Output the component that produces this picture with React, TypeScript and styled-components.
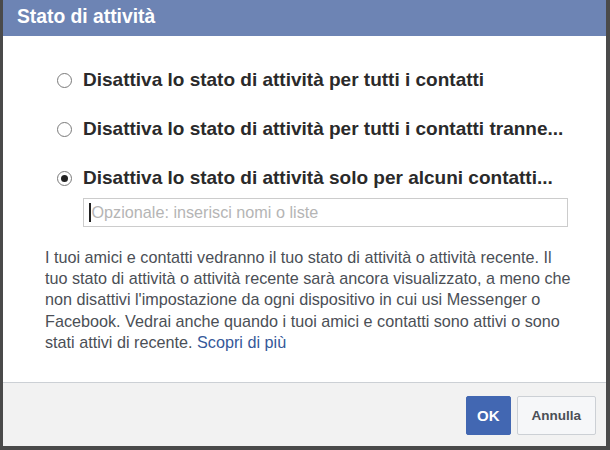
import React from "react";
import styled, { createGlobalStyle } from "styled-components";

const Global = createGlobalStyle`
  html, body { margin: 0; padding: 0; background: #fff; }
  body { font-family: "Liberation Sans", Arial, sans-serif; }
`;

const Dialog = styled.div`
  width: 610px;
  height: 450px;
  box-sizing: border-box;
  border-left: 3px solid #4a4a4a;
  border-right: 4px solid #4a4a4a;
  border-bottom: 4px solid #4a4a4a;
  display: flex;
  flex-direction: column;
  background: #fff;
`;

const Header = styled.div`
  height: 36px;
  flex: none;
  background: #6d84b4;
  color: #fff;
  font-weight: bold;
  font-size: 19.3px;
  display: flex;
  align-items: center;
  padding-left: 14px;
  padding-bottom: 3px;
  box-sizing: border-box;
`;

const Body = styled.div`
  flex: 1;
  padding: 34px 30px 0 42px;
  display: flex;
  flex-direction: column;
`;

const Options = styled.div`
  display: flex;
  flex-direction: column;
  gap: 29px;
  padding-left: 12px;
`;

const Option = styled.label`
  display: flex;
  align-items: center;
  gap: 11px;
  height: 20px;
  font-size: 19px;
  font-weight: bold;
  color: #2a2a2a;
`;

const Radio = styled.span<{ $checked?: boolean }>`
  width: 15px;
  height: 15px;
  border-radius: 50%;
  border: 1.5px solid #7a7a7a;
  box-sizing: border-box;
  display: flex;
  align-items: center;
  justify-content: center;
  flex: none;
  &::after {
    content: "";
    display: ${(p) => (p.$checked ? "block" : "none")};
    width: 7px;
    height: 7px;
    border-radius: 50%;
    background: #222;
  }
`;

const Input = styled.div`
  margin: 10px 0 0 38px;
  width: 485px;
  height: 29px;
  box-sizing: border-box;
  border: 1px solid #ccc;
  display: flex;
  align-items: center;
  padding-left: 5px;
  font-size: 16.2px;
  color: #b5b5b5;
`;

const Caret = styled.span`
  width: 1.5px;
  height: 19px;
  background: #222;
  margin-right: 1px;
`;

const Paragraph = styled.p`
  margin: 20px 0 0 0;
  font-size: 16.2px;
  line-height: 21.2px;
  color: #4b4f56;
  white-space: nowrap;
`;

const Link = styled.a`
  color: #365899;
  text-decoration: none;
`;

const Footer = styled.div`
  height: 64px;
  flex: none;
  box-sizing: border-box;
  border-top: 1px solid #ccd0d5;
  background: #f2f2f2;
  display: flex;
  justify-content: flex-end;
  align-items: flex-start;
  padding: 13px 10px 0 0;
  gap: 6px;
`;

const Button = styled.button<{ $primary?: boolean }>`
  height: 39px;
  box-sizing: border-box;
  border-radius: 2px;
  font-family: "Liberation Sans", Arial, sans-serif;
  font-weight: bold;
  font-size: ${(p) => (p.$primary ? "15px" : "13.5px")};
  padding: 0 ${(p) => (p.$primary ? "10px" : "14px")};
  border: 1px solid ${(p) => (p.$primary ? "#4267b2" : "#ccd0d5")};
  background: ${(p) => (p.$primary ? "#4267b2" : "#f6f7f9")};
  color: ${(p) => (p.$primary ? "#fff" : "#4b4f56")};
`;

export default function App() {
  return (
    <>
      <Global />
      <Dialog>
        <Header>Stato di attività</Header>
        <Body>
          <Options>
            <Option>
              <Radio />
              Disattiva lo stato di attività per tutti i contatti
            </Option>
            <Option>
              <Radio />
              Disattiva lo stato di attività per tutti i contatti tranne...
            </Option>
            <Option>
              <Radio $checked />
              Disattiva lo stato di attività solo per alcuni contatti...
            </Option>
          </Options>
          <Input>
            <Caret />
            Opzionale: inserisci nomi o liste
          </Input>
          <Paragraph>
            I tuoi amici e contatti vedranno il tuo stato di attività o attività recente. Il
            <br />
            tuo stato di attività o attività recente sarà ancora visualizzato, a meno che
            <br />
            non disattivi l'impostazione da ogni dispositivo in cui usi Messenger o
            <br />
            Facebook. Vedrai anche quando i tuoi amici e contatti sono attivi o sono
            <br />
            stati attivi di recente. <Link href="#">Scopri di più</Link>
          </Paragraph>
        </Body>
        <Footer>
          <Button $primary>OK</Button>
          <Button>Annulla</Button>
        </Footer>
      </Dialog>
    </>
  );
}
